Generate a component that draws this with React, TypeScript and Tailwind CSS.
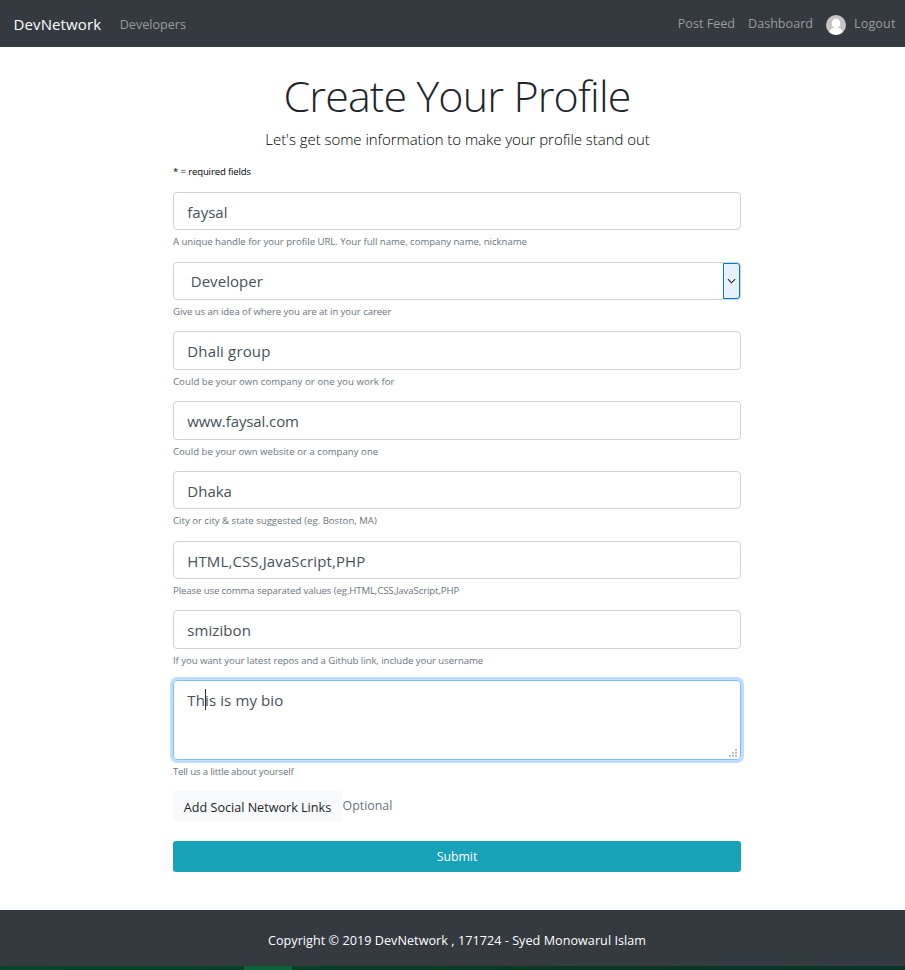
import React from 'react';

type FieldProps = {
  value: string;
  hint: string;
  valueTracking?: string;
  hintTracking?: string;
};

const fields: FieldProps[] = [
  { value: 'Dhali group', hint: 'Could be your own company or one you work for', valueTracking: 'tracking-[0.15px]', hintTracking: 'tracking-[0.065px]' },
  { value: 'www.faysal.com', hint: 'Could be your own website or a company one', valueTracking: 'tracking-[-0.1px]', hintTracking: 'tracking-[0.02px]' },
  { value: 'Dhaka', hint: 'City or city & state suggested (eg. Boston, MA)' },
  { value: 'HTML,CSS,JavaScript,PHP', hint: 'Please use comma separated values (eg.HTML,CSS,JavaScript,PHP', valueTracking: 'tracking-[0.12px]', hintTracking: 'tracking-[-0.1px]' },
  { value: 'smizibon', hint: 'If you want your latest repos and a Github link, include your username', valueTracking: 'tracking-[0.08px]', hintTracking: 'tracking-[-0.055px]' },
];

function Hint({ children, tracking = '' }: { children: React.ReactNode; tracking?: string }) {
  return (
    <div className="mt-[4px] h-[15px] whitespace-nowrap text-[9.6px] leading-[15px] text-[#6c757d]">
      <span className={tracking}>{children}</span>
    </div>
  );
}

function Field({ value, hint, valueTracking = '', hintTracking = '' }: FieldProps) {
  return (
    <div className="h-[69.72px]">
      <div className="flex h-[38.4px] items-center rounded-[4px] border border-[#ced4da] pl-[13.3px] pt-[2px] text-[15px] text-[#495057]">
        <span className={valueTracking}>{value}</span>
      </div>
      <Hint tracking={hintTracking}>{hint}</Hint>
    </div>
  );
}

function Avatar() {
  return (
    <svg className="ml-[13px] mr-[8px] mt-[3px] h-5 w-5" viewBox="0 0 20 20">
      <defs>
        <clipPath id="disc"><circle cx="10" cy="10" r="10" /></clipPath>
      </defs>
      <g clipPath="url(#disc)">
        <rect width="20" height="20" fill="#c5c5c5" />
        <ellipse cx="10" cy="8.4" rx="4.3" ry="4.9" fill="#fff" />
        <path d="M2.5 20C3 15 5.5 13.6 8 12.8h4c2.5.8 5 2.2 5.5 7.2z" fill="#fff" />
      </g>
    </svg>
  );
}

export default function App() {
  return (
    <div className="flex h-[970px] w-[905px] flex-col overflow-hidden bg-white font-['Open_Sans','Noto_Sans',sans-serif] text-[#212529]">
      <nav className="flex h-[47px] items-center bg-[#343a40] pl-[13.5px] pr-[9.5px] text-[12.6px] text-[#999c9f]">
        <span className="mt-[2px] text-[15px] tracking-[0.12px] text-white">DevNetwork</span>
        <span className="ml-[18.5px] mt-[3px]">Developers</span>
        <span className="ml-auto mt-[2px]">Post Feed</span>
        <span className="ml-[13px] mt-[2px]">Dashboard</span>
        <Avatar />
        <span className="mt-[2px] tracking-[0.12px]">Logout</span>
      </nav>

      <main className="flex h-[863px] flex-col pl-[173px]">
        <div className="w-[568px]">
          <h1 className="mt-[19px] h-[60px] whitespace-nowrap text-center text-[43px] font-light leading-[60px] tracking-[-0.85px]">
            Create Your Profile
          </h1>
          <p className="mt-[2px] h-[22px] whitespace-nowrap pl-px text-center text-[15px] font-light leading-[22px] tracking-[-0.05px] text-black">Let's get some information to make your profile stand out</p>
          <div className="mt-[14px] h-[28px] text-[9.6px] leading-[16px] tracking-[-0.15px] text-black">* = required fields</div>

          <Field value="faysal" hint="A unique handle for your profile URL. Your full name, company name, nickname" hintTracking="tracking-[-0.03px]" />

          <div className="h-[69.72px]">
            <div className="flex h-[38.4px] items-center justify-between rounded-[4px] border border-[#ced4da] pl-[16.7px] text-[15px] text-[#495057]">
              <span className="tracking-[0.06px]">Developer</span>
              <span className="flex h-full w-[17px] items-center justify-center rounded-r-[3px] border border-[#0078d7] bg-[#e5f1fb]">
                <svg className="h-[6px] w-[9px]" viewBox="0 0 10 6" fill="none" stroke="#202020" strokeWidth="1.2">
                  <path d="M1 1l4 4 4-4" />
                </svg>
              </span>
            </div>
            <Hint tracking="tracking-[-0.07px]">Give us an idea of where you are at in your career</Hint>
          </div>

          {fields.map((f) => (
            <Field key={f.value} {...f} />
          ))}

          <div className="relative h-[80px] rounded-[4px] border border-[#80bdff] pl-[13.3px] pt-[7px] text-[15px] leading-[24px] text-[#495057] shadow-[0_0_0_3px_#bfdeff]">
            <span className="tracking-[0.12px]">This is my bio</span>
            <span className="absolute left-[31px] top-[8px] h-[21px] w-px bg-[#333]" />
            <svg className="absolute bottom-[2px] right-[3px] h-[8px] w-[8px]" viewBox="0 0 8 8" fill="#bfbfbf" shapeRendering="crispEdges">
              <path d="M6 0h2v2H6zM3 3h2v2H3zM6 3h2v2H6zM0 6h2v2H0zM3 6h2v2H3zM6 6h2v2H6z" />
            </svg>
          </div>
          <Hint tracking="tracking-[-0.16px]">Tell us a little about yourself</Hint>

          <div className="mt-[12px] flex h-[31px]">
            <div className="flex w-[169px] items-center justify-center whitespace-nowrap rounded-[3px] bg-[#f8f9fa] pt-[3px] text-[12.6px]">Add Social Network Links</div>
            <span className="ml-[0.5px] mt-[5px] text-[12.4px] leading-[20px] text-[#6c757d]">Optional</span>
          </div>
          <div className="mt-[19px] flex h-[31px] items-center justify-center rounded-[3px] bg-[#17a2b8] pt-[2px] text-[12.3px] text-white">Submit</div>
        </div>
      </main>

      <footer className="flex h-[56px] items-center justify-center bg-[#343a40] pl-[9px] pt-[6px] text-[12.6px] tracking-[0.05px] text-white">
        <span>Copyright © 2019 DevNetwork , 171724 - Syed Monowarul Islam</span>
      </footer>
      <div className="flex h-[4px] bg-linear-to-r from-[#06452c] to-[#093324]">
        <div className="ml-[244px] w-[48px] bg-[#0c6435]" />
      </div>
    </div>
  );
}
